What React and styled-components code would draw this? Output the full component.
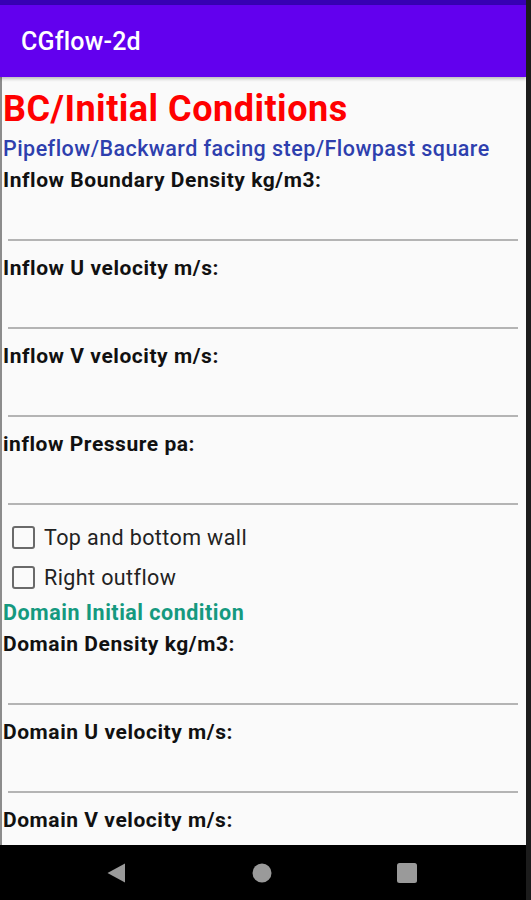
import styled, { createGlobalStyle } from "styled-components";

const GlobalStyle = createGlobalStyle`
  html, body {
    margin: 0;
    padding: 0;
    background: #000;
  }
  body {
    font-family: Roboto, "Liberation Sans", sans-serif;
  }
`;

const Screen = styled.div`
  width: 526px;
  height: 900px;
  border-right: 5px solid #1c1c1c;
  display: flex;
  flex-direction: column;
  overflow: hidden;
  background: #000;
`;

const StatusBar = styled.div`
  height: 5px;
  background: #3700b3;
`;

const AppBar = styled.header`
  height: 72px;
  background: #6200ee;
  display: flex;
  align-items: center;
  padding-left: 21px;
  box-shadow: 0 2px 3px rgba(0, 0, 0, 0.25);
  position: relative;
  z-index: 1;
`;

const AppTitle = styled.h1`
  margin: 0;
  color: #fff;
  font-size: 25px;
  font-weight: 500;
  letter-spacing: 0.2px;
`;

const Content = styled.main`
  flex: 1;
  min-height: 0;
  overflow: hidden;
  background: #fafafa;
  border-left: 2px solid #8c8c8c;
  padding: 12px 8px 0 1px;
  display: flex;
  flex-direction: column;
  white-space: nowrap;
`;

const PageTitle = styled.h2`
  margin: 0;
  color: #ff0000;
  font-size: 36px;
  line-height: 40px;
  font-weight: 700;
  letter-spacing: 0.5px;
`;

const SubTitle = styled.p`
  margin: 8px 0 7px;
  color: #2e3fae;
  font-size: 21.5px;
  line-height: 24px;
  font-weight: 500;
  letter-spacing: 0.45px;
`;

const SectionTitle = styled.p`
  margin: 4px 0 7px;
  color: #15997f;
  font-size: 21.5px;
  line-height: 24px;
  font-weight: 700;
  letter-spacing: 0.5px;
`;

const Field = styled.div`
  display: flex;
  flex-direction: column;
  margin-bottom: 15px;
`;

const Label = styled.label`
  color: #111;
  font-size: 21px;
  line-height: 24px;
  font-weight: 700;
  letter-spacing: 0.55px;
`;

const Input = styled.input`
  height: 49px;
  margin: 0 0 0 5px;
  padding: 0;
  border: none;
  border-bottom: 2px solid #b4b4b4;
  background: transparent;
  outline: none;
  font-family: inherit;
  font-size: 20px;
  box-sizing: border-box;
`;

const CheckList = styled.div`
  display: flex;
  flex-direction: column;
  margin-top: -3px;
`;

const CheckRow = styled.label`
  height: 40px;
  display: flex;
  align-items: center;
  gap: 9px;
  padding-left: 9px;
  color: #222;
  font-size: 21.5px;
  letter-spacing: 0.4px;
`;

const Box = styled.span`
  width: 23px;
  height: 23px;
  box-sizing: border-box;
  border: 2.5px solid #6a6a6a;
  border-radius: 3px;
`;

const NavBar = styled.nav`
  height: 55px;
  flex-shrink: 0;
  background: #000;
  display: flex;
  align-items: center;
  gap: 123.5px;
  padding-left: 105px;
`;

const NavIcon = styled.svg`
  width: 22px;
  height: 22px;
  fill: #9a9a9a;
`;

const fields = [
  "Inflow Boundary Density kg/m3:",
  "Inflow U velocity m/s:",
  "Inflow V velocity m/s:",
  "inflow Pressure pa:",
];

const domainFields = [
  "Domain Density kg/m3:",
  "Domain U velocity m/s:",
  "Domain V velocity m/s:",
];

const FormField = ({ label }) => (
  <Field>
    <Label>{label}</Label>
    <Input type="text" />
  </Field>
);

export default function App() {
  return (
    <>
      <GlobalStyle />
      <Screen>
        <StatusBar />
        <AppBar>
          <AppTitle>CGflow-2d</AppTitle>
        </AppBar>
        <Content>
          <PageTitle>BC/Initial Conditions</PageTitle>
          <SubTitle>Pipeflow/Backward facing step/Flowpast square</SubTitle>
          {fields.map((f) => (
            <FormField key={f} label={f} />
          ))}
          <CheckList>
            <CheckRow>
              <Box />
              Top and bottom wall
            </CheckRow>
            <CheckRow>
              <Box />
              Right outflow
            </CheckRow>
          </CheckList>
          <SectionTitle>Domain Initial condition</SectionTitle>
          {domainFields.map((f) => (
            <FormField key={f} label={f} />
          ))}
        </Content>
        <NavBar>
          <NavIcon viewBox="0 0 22 22">
            <path d="M20 1.5 L20 20.5 L2.5 11 Z" />
          </NavIcon>
          <NavIcon viewBox="0 0 22 22">
            <circle cx="11" cy="11" r="9.5" />
          </NavIcon>
          <NavIcon viewBox="0 0 22 22">
            <rect x="1" y="1" width="20" height="20" rx="2.5" />
          </NavIcon>
        </NavBar>
      </Screen>
    </>
  );
}
